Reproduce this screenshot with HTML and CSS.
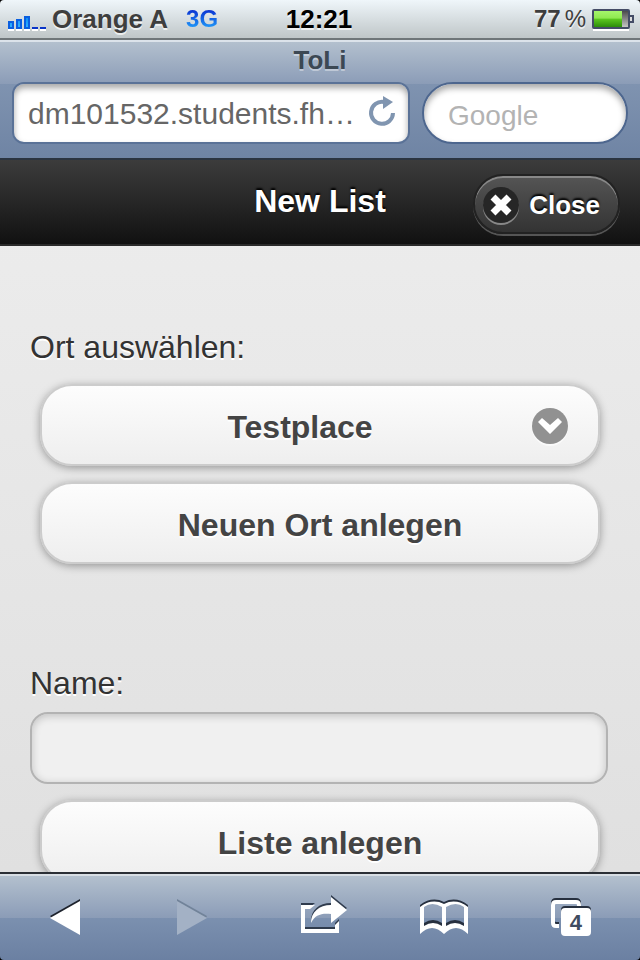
FILE: index.html
```
<!DOCTYPE html>
<html lang="de">
<head>
<meta charset="utf-8">
<meta name="viewport" content="width=device-width, initial-scale=1">
<title>ToLi</title>
<link rel="stylesheet" href="styles.css">
</head>
<body>
<div class="phone">
	<!-- status bar -->
	<div class="status">
		<div class="status-left">
			<svg class="signal" width="38" height="16" viewBox="0 0 38 16">
				<defs>
					<linearGradient id="bar" x1="0" y1="0" x2="0" y2="1">
						<stop offset="0" stop-color="#0a8df5"/>
						<stop offset="1" stop-color="#35b5ff"/>
					</linearGradient>
				</defs>
				<path d="M0 14h6v2H0zM8 14h6v2H8zM16 14h6v2h-6zM24 14h6v2h-6zM32 14h6v2h-6z" fill="#fff"/>
				<path d="M1 7h4v6H1zM9 5h4v8H9zM17 2h4v11h-4z" fill="url(#bar)" stroke="#0a5fe0" stroke-width="2"/>
				<path d="M24 12h6v2h-6zM32 12h6v2h-6z" fill="#0a35c8"/>
			</svg>
			<span class="carrier">Orange A</span>
			<span class="net">3G</span>
		</div>
		<span class="time">12:21</span>
		<div class="status-right">
			<span class="percent">77<span class="percent-sign">%</span></span>
			<svg class="battery" width="42" height="22" viewBox="0 0 42 22">
				<defs>
					<linearGradient id="charge" x1="0" y1="0" x2="0" y2="1">
						<stop offset="0" stop-color="#a5f56b"/>
						<stop offset="0.45" stop-color="#8fe850"/>
						<stop offset="0.5" stop-color="#5cc81f"/>
						<stop offset="1" stop-color="#2c8c0a"/>
					</linearGradient>
					<linearGradient id="empty" x1="0" y1="0" x2="0" y2="1">
						<stop offset="0" stop-color="#444"/>
						<stop offset="1" stop-color="#ccc"/>
					</linearGradient>
				</defs>
				<path d="M1 20h36v2H1z" fill="#fff"/>
				<rect x="1" y="1" width="36" height="18" rx="1" fill="url(#empty)" stroke="#444c66" stroke-width="2"/>
				<rect x="2" y="2" width="28" height="16" fill="url(#charge)"/>
				<path d="M38 7h3v6h-3" fill="#ddd" stroke="#444c66" stroke-width="2"/>
			</svg>
		</div>
	</div>

	<!-- safari address bar -->
	<div class="browser">
		<div class="browser-title">ToLi</div>
		<div class="browser-row">
			<div class="url-box">
				<input class="url" type="text" value="dm101532.students.fh…" aria-label="Adresse">
				<button class="reload" type="button" aria-label="Neu laden">
					<svg width="28" height="32" viewBox="0 0 28 32">
						<path d="M25 17A11 11 0 1 1 16 6" fill="none" stroke="#8095b0" stroke-width="4"/>
						<path d="M15 0v13l10-7z" fill="#8095b0"/>
					</svg>
				</button>
			</div>
			<input class="search" type="text" placeholder="Google" aria-label="Suche">
		</div>
	</div>

	<div class="page">
		<div class="header">
			<h1 class="header-title">New List</h1>
			<a class="close" href="#">
				<span class="close-icon">
					<svg width="22" height="22" viewBox="0 0 22 22">
						<path d="M3 3l16 16M19 3L3 19" stroke="#fff" stroke-width="7"/>
					</svg>
				</span>
				Close
			</a>
		</div>
		<form class="content">
			<div class="field">
				<label class="label" for="place">Ort auswählen:</label>
				<div class="select-box">
					<select class="btn select" id="place">
						<option>Testplace</option>
					</select>
					<span class="select-icon">
						<svg width="24" height="16" viewBox="0 0 24 16">
							<path d="M0 4L4 0l8 7 8-7 4 4-12 12z" fill="#fff"/>
						</svg>
					</span>
				</div>
				<button class="btn" type="button">Neuen Ort anlegen</button>
			</div>
			<div class="field">
				<label class="label" for="name">Name:</label>
				<input class="text" id="name" type="text">
				<button class="btn" type="button">Liste anlegen</button>
			</div>
		</form>
	</div>

	<!-- safari toolbar -->
	<div class="toolbar">
		<button class="tool" type="button" aria-label="Zurück">
			<svg width="30" height="36" viewBox="0 0 30 36">
				<path d="M0 17L30 0v4L2 19z" fill="#1d222c"/>
				<path d="M0 19L30 2v34z" fill="#fff"/>
			</svg>
		</button>
		<button class="tool" type="button" aria-label="Vorwärts" disabled>
			<svg width="30" height="36" viewBox="0 0 30 36">
				<path d="M0 0l30 17-1 2L0 3z" fill="#718399"/>
				<path d="M0 2l30 17L0 36z" fill="#a3b1c5"/>
			</svg>
		</button>
		<button class="tool" type="button" aria-label="Teilen">
			<svg width="58" height="44" viewBox="-12 0 58 44">
				<g fill="#2f3b4d">
					<path d="M0 8h14l-5 4H4v20h30v-4l4-4v12H0z"/>
					<path d="M10 26C10 15 18 8 30 8V0l16 13-16 13v-9C20 16 14 18 10 26z"/>
				</g>
				<g fill="#fff">
					<path d="M0 10h14l-5 4H4v20h30v-4l4-4v12H0z"/>
					<path d="M10 28C10 17 18 10 30 10V2l16 13-16 13v-9C20 18 14 20 10 28z"/>
				</g>
			</svg>
		</button>
		<button class="tool" type="button" aria-label="Lesezeichen">
			<svg width="48" height="36" viewBox="0 0 48 36">
				<path d="M0 30V6Q12-3 24 3Q36-3 48 6V30Q36 20 24 32Q12 20 0 30zM4 6V24Q13 18 22 24V6Q12 0 4 6zM26 6V24Q35 18 44 24V6Q36 0 26 6z" fill="#27303f" fill-rule="evenodd"/>
				<path d="M0 35V8Q12-1 24 5Q36-1 48 8V35Q36 23 24 35Q12 23 0 35zM4 8V27Q13 21 22 27V8Q12 2 4 8zM26 8V27Q35 21 44 27V8Q36 2 26 8z" fill="#fff" fill-rule="evenodd"/>
			</svg>
		</button>
		<button class="tool tabs" type="button" aria-label="Seiten">
			<svg width="40" height="38" viewBox="0 0 40 38">
				<path d="M8 26H5q-3 0-3-3V5q0-3 3-3h20q3 0 3 3v3" fill="none" stroke="#27303f" stroke-width="4"/>
				<path d="M8 28H5q-3 0-3-3V7q0-3 3-3h20q3 0 3 3v3" fill="none" stroke="#fff" stroke-width="4"/>
				<rect x="10" y="8" width="30" height="28" rx="4" fill="#27303f"/>
				<rect x="10" y="10" width="30" height="28" rx="4" fill="#fff"/>
			</svg>
			<span class="tabs-num">4</span>
		</button>
	</div>
</div>
</body>
</html>
```
FILE: styles.css
```
*{ box-sizing:border-box;}
body,h1{ margin:0; padding:0;}
body{ background:#000; font-family:"Liberation Sans",Helvetica,Arial,sans-serif;}
button,input,select{ margin:0; padding:0; border:0; background:none; font-family:inherit; outline:none;}
svg{ display:block;}
.phone{ display:flex; flex-direction:column; height:100vh; border-radius:4px; overflow:hidden;}

/* status bar */
.status{ display:grid; grid-template-columns:1fr auto 1fr; align-items:center; height:40px; padding:0 6px 0 8px; border-bottom:2px solid #6f7679; background:linear-gradient(#eff6fa,#bfc6c8); font-size:26px; line-height:38px; font-weight:bold; color:#3e3e3e; text-shadow:0 2px 0 rgba(255,255,255,.7);}
.status-left{ display:flex; align-items:center; gap:6px;}
.signal{ margin-top:8px;}
.net{ margin-left:12px; font-size:24px; background:linear-gradient(#0a30d0 25%,#22a8ff 80%); -webkit-background-clip:text; background-clip:text; color:transparent; text-shadow:none;}
.time{ padding-right:4px; color:#000;}
.status-right{ display:flex; align-items:center; justify-content:flex-end; gap:6px;}
.percent{ font-size:24px;}
.percent-sign{ margin-left:4px; font-weight:normal;}
.battery{ margin-top:2px;}

/* address bar */
.browser{ height:118px; padding:2px 12px 0; border-top:2px solid #dce3ea; background:linear-gradient(#b3c0ce,#8b9cb7 42px,#7f93b0 42px,#6f84a4);}
.browser-title{ height:38px; line-height:32px; text-align:center; font-size:26px; font-weight:bold; color:#3c4854; text-shadow:0 2px 0 rgba(255,255,255,.4);}
.browser-row{ display:flex; gap:12px;}
.url-box{ display:flex; flex:1; align-items:center; min-width:0; height:62px; padding:0 12px 0 14px; border:2px solid #5a7297; border-radius:12px; background:#fff; box-shadow:inset 0 4px 6px rgba(0,0,0,.35);}
.url{ flex:1; min-width:0; height:58px; padding-top:2px; font-size:30px; color:#666;}
.reload{ flex:none; padding-bottom:2px;}
.search{ flex:none; width:206px; height:62px; padding:6px 24px 0; border:2px solid #4d668e; border-radius:31px; background:#fff; box-shadow:inset 0 4px 6px rgba(0,0,0,.35); font-size:28px; color:#666;}
.search::placeholder{ color:#b3b3b3; opacity:1;}

/* page */
.page{ flex:1; min-height:0; overflow:hidden; background:linear-gradient(#ededed,#e0e0e0);}
.header{ display:grid; grid-template-columns:1fr auto 1fr; align-items:center; height:88px; padding:4px 20px 0; border-top:2px solid #2b3441; border-bottom:2px solid #2a2a2a; background:linear-gradient(#3c3c3c,#111);}
.header-title{ grid-column:2; padding-bottom:6px; font-size:32px; line-height:40px; color:#fff; text-shadow:0 -2px 2px #000;}
.close{ display:flex; align-items:center; justify-self:end; gap:10px; height:60px; padding:2px 18px 0 8px; border:2px solid #222; border-radius:30px; background:linear-gradient(#555,#333); box-shadow:inset 0 2px 0 #888,0 2px 0 #555; font-size:26px; font-weight:bold; color:#fff; text-decoration:none; text-shadow:0 -2px 2px #000;}
.close-icon{ display:flex; align-items:center; justify-content:center; width:36px; height:36px; border-radius:50%; background:#262626; box-shadow:0 2px 0 #888;}
.content{ padding:82px 32px 0 30px;}
.field{ display:flex; flex-direction:column; gap:16px; margin-bottom:100px;}
.label{ height:40px; line-height:38px; font-size:32px; color:#333; text-shadow:0 2px 0 #fff;}
.btn{ display:block; height:82px; margin:0 8px 0 10px; padding-top:4px; border:2px solid #ccc; border-radius:32px; background:linear-gradient(#fdfdfd,#eee); box-shadow:0 2px 8px rgba(0,0,0,.35); font-size:32px; font-weight:bold; text-align:center; color:#444; text-shadow:0 2px 0 #fff;}
.select-box{ display:grid; align-items:center;}
.select-box > *{ grid-area:1/1;}
.select{ padding:4px 40px 0 0; appearance:none; -webkit-appearance:none; text-align-last:center;}
.select-icon{ display:flex; align-items:center; justify-content:center; justify-self:end; width:36px; height:36px; margin:2px 40px 0 0; border-radius:50%; background:#919191; box-shadow:0 2px 0 rgba(255,255,255,.6); pointer-events:none;}
.text{ height:72px; margin-top:-8px; padding:0 12px; border:2px solid #b3b3b3; border-radius:18px; background:#f0f0f0; box-shadow:inset 0 2px 8px rgba(0,0,0,.2); font-size:32px; color:#333;}

/* toolbar */
.toolbar{ display:grid; grid-template-columns:repeat(5,1fr); flex:none; height:88px; padding:2px 6px 2px 2px; border-top:2px solid #2b2f35; background:linear-gradient(#d8dee4 2px,#b3c0ce 2px,#8b9cb7 44px,#7b90af 44px,#6b80a2);}
.tool{ display:flex; align-items:center; justify-content:center;}
.tabs{ display:grid; place-content:center;}
.tabs > *{ grid-area:1/1;}
.tabs-num{ padding:11px 0 0 10px; font-size:22px; line-height:26px; font-weight:bold; color:#3f4c60;}
```
